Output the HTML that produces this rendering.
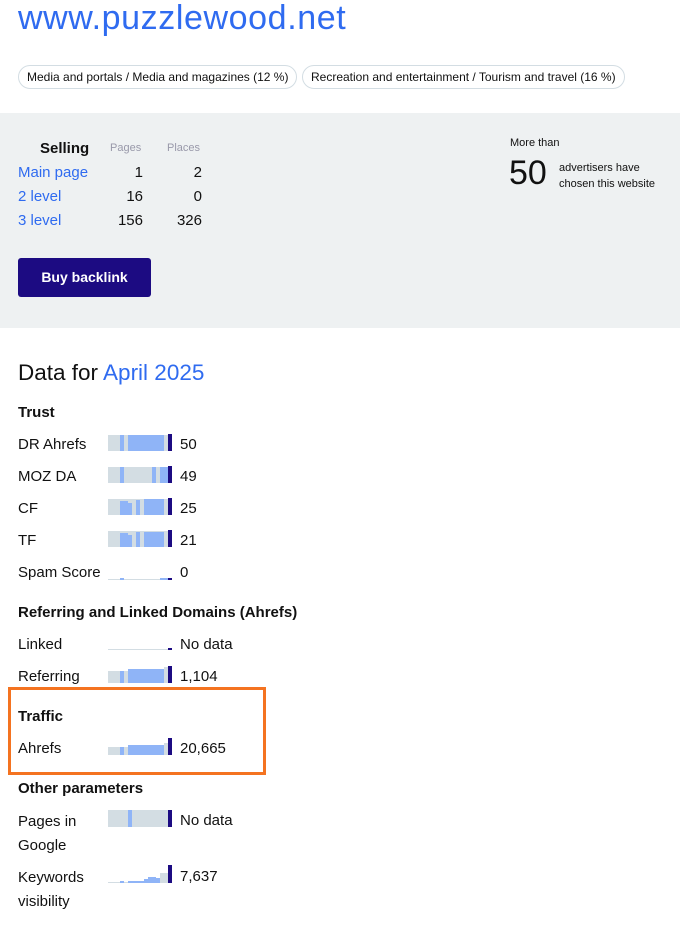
<!DOCTYPE html>
<html><head><meta charset="utf-8"><style>
body{margin:0;width:680px;height:935px;background:#fff;font-family:"Liberation Sans",sans-serif;color:#111;position:relative;overflow:hidden}
.a{position:absolute}
.t{font-size:15px;white-space:nowrap}
.ch{position:absolute;left:108px;width:64px}
.ch div{position:absolute;bottom:0}
.g{background:#d3dde3}.b{background:#8fb4f7}.n{background:#1c0b82}
.h{font-weight:bold;font-size:15px}
</style></head><body>
<div class="a" style="left:18px;top:-1px;font-size:34px;color:#2f6bf0;letter-spacing:0.6px">www.puzzlewood.net</div>
<div class="a t" style="left:18px;top:65px;height:22px;line-height:22px;padding:0 8px;border:1px solid #d3dde3;border-radius:12px;font-size:12px">Media and portals / Media and magazines (12 %)</div>
<div class="a t" style="left:302px;top:65px;height:22px;line-height:22px;padding:0 8px;border:1px solid #d3dde3;border-radius:12px;font-size:12px">Recreation and entertainment / Tourism and travel (16 %)</div>
<div class="a" style="left:0;top:113px;width:680px;height:215px;background:#eef1f2"></div>
<div class="a" style="left:40px;top:140px;font-weight:bold;font-size:15px">Selling</div>
<div class="a" style="left:110px;top:142px;font-size:11px;color:#99a">Pages</div>
<div class="a" style="left:167px;top:142px;font-size:11px;color:#99a">Places</div>
<div class="a t" style="left:18px;top:164px;color:#2f6bf0">Main page</div>
<div class="a t" style="left:18px;top:188px;color:#2f6bf0">2 level</div>
<div class="a t" style="left:18px;top:212px;color:#2f6bf0">3 level</div>
<div class="a t" style="left:100px;width:43px;text-align:right;top:164px">1</div>
<div class="a t" style="left:100px;width:43px;text-align:right;top:188px">16</div>
<div class="a t" style="left:100px;width:43px;text-align:right;top:212px">156</div>
<div class="a t" style="left:160px;width:42px;text-align:right;top:164px">2</div>
<div class="a t" style="left:160px;width:42px;text-align:right;top:188px">0</div>
<div class="a t" style="left:160px;width:42px;text-align:right;top:212px">326</div>
<div class="a" style="left:18px;top:258px;width:133px;height:39px;background:#1c0b82;border-radius:3px;color:#fff;font-weight:bold;font-size:14px;text-align:center;line-height:39px">Buy backlink</div>
<div class="a" style="left:510px;top:137px;font-size:11px">More than</div>
<div class="a" style="left:509px;top:154px;font-size:34px">50</div>
<div class="a" style="left:559px;top:160px;font-size:11px;line-height:16px">advertisers have<br>chosen this website</div>
<div class="a" style="left:18px;top:360px;font-size:22.5px">Data for <span style="color:#2f6bf0">April 2025</span></div>
<div class="a h" style="left:18px;top:404px">Trust</div>
<div class="a t" style="left:18px;top:436px">DR Ahrefs</div>
<div class="a t" style="left:18px;top:468px">MOZ DA</div>
<div class="a t" style="left:18px;top:500px">CF</div>
<div class="a t" style="left:18px;top:532px">TF</div>
<div class="a t" style="left:18px;top:564px">Spam Score</div>
<div class="a t" style="left:180px;top:436px">50</div>
<div class="a t" style="left:180px;top:468px">49</div>
<div class="a t" style="left:180px;top:500px">25</div>
<div class="a t" style="left:180px;top:532px">21</div>
<div class="a t" style="left:180px;top:564px">0</div>
<div class="ch" style="top:434px;height:17px"><div class="g" style="left:0;width:60px;height:16px"></div><div class="b" style="left:12px;width:4px;height:16px"></div><div class="b" style="left:20px;width:36px;height:16px"></div><div class="n" style="left:60px;width:4px;height:17px"></div></div>
<div class="ch" style="top:466px;height:17px"><div class="g" style="left:0;width:60px;height:16px"></div><div class="b" style="left:12px;width:4px;height:16px"></div><div class="b" style="left:44px;width:4px;height:16px"></div><div class="b" style="left:52px;width:8px;height:16px"></div><div class="n" style="left:60px;width:4px;height:17px"></div></div>
<div class="ch" style="top:498px;height:17px"><div class="g" style="left:0;width:60px;height:16px"></div><div class="b" style="left:12px;width:8px;height:14px"></div><div class="b" style="left:20px;width:4px;height:12px"></div><div class="b" style="left:28px;width:4px;height:15px"></div><div class="b" style="left:36px;width:20px;height:16px"></div><div class="n" style="left:60px;width:4px;height:17px"></div></div>
<div class="ch" style="top:530px;height:17px"><div class="g" style="left:0;width:60px;height:16px"></div><div class="b" style="left:12px;width:8px;height:14px"></div><div class="b" style="left:20px;width:4px;height:12px"></div><div class="b" style="left:28px;width:4px;height:15px"></div><div class="b" style="left:36px;width:20px;height:15px"></div><div class="n" style="left:60px;width:4px;height:17px"></div></div>
<div class="ch" style="top:574px;height:6px"><div class="g" style="left:0;width:60px;height:1px"></div><div class="b" style="left:12px;width:4px;height:2px"></div><div class="b" style="left:52px;width:8px;height:2px"></div><div class="n" style="left:60px;width:4px;height:2px"></div></div>
<div class="a h" style="left:18px;top:604px">Referring and Linked Domains (Ahrefs)</div>
<div class="a t" style="left:18px;top:636px">Linked</div>
<div class="a t" style="left:18px;top:668px">Referring</div>
<div class="a t" style="left:180px;top:636px">No data</div>
<div class="a t" style="left:180px;top:668px">1,104</div>
<div class="ch" style="top:645px;height:5px"><div class="g" style="left:0;width:60px;height:1px"></div><div class="n" style="left:60px;width:4px;height:2px"></div></div>
<div class="ch" style="top:666px;height:17px"><div class="g" style="left:0;width:60px;height:12px"></div><div class="b" style="left:12px;width:4px;height:12px"></div><div class="b" style="left:20px;width:36px;height:14px"></div><div class="g" style="left:56px;width:4px;height:16px"></div><div class="n" style="left:60px;width:4px;height:17px"></div></div>
<div class="a" style="left:8px;top:687px;width:252px;height:82px;border:3px solid #f47320"></div>
<div class="a h" style="left:18px;top:708px">Traffic</div>
<div class="a t" style="left:18px;top:740px">Ahrefs</div>
<div class="a t" style="left:180px;top:740px">20,665</div>
<div class="ch" style="top:738px;height:17px"><div class="g" style="left:0;width:60px;height:8px"></div><div class="b" style="left:12px;width:4px;height:8px"></div><div class="b" style="left:20px;width:36px;height:10px"></div><div class="g" style="left:56px;width:4px;height:12px"></div><div class="n" style="left:60px;width:4px;height:17px"></div></div>
<div class="a h" style="left:18px;top:780px">Other parameters</div>
<div class="a t" style="left:18px;top:810px;line-height:24px">Pages in<br>Google</div>
<div class="a t" style="left:180px;top:812px">No data</div>
<div class="a t" style="left:18px;top:866px;line-height:24px">Keywords<br>visibility</div>
<div class="a t" style="left:180px;top:868px">7,637</div>
<div class="ch" style="top:810px;height:17px"><div class="g" style="left:0;width:60px;height:17px"></div><div class="b" style="left:20px;width:4px;height:17px"></div><div class="n" style="left:60px;width:4px;height:17px"></div></div>
<div class="ch" style="top:865px;height:18px"><div class="g" style="left:0;width:60px;height:1px"></div><div class="b" style="left:12px;width:4px;height:2px"></div><div class="b" style="left:20px;width:16px;height:2px"></div><div class="b" style="left:36px;width:4px;height:4px"></div><div class="b" style="left:40px;width:8px;height:6px"></div><div class="b" style="left:48px;width:4px;height:5px"></div><div class="g" style="left:52px;width:8px;height:10px"></div><div class="n" style="left:60px;width:4px;height:18px"></div></div>
</body></html>
